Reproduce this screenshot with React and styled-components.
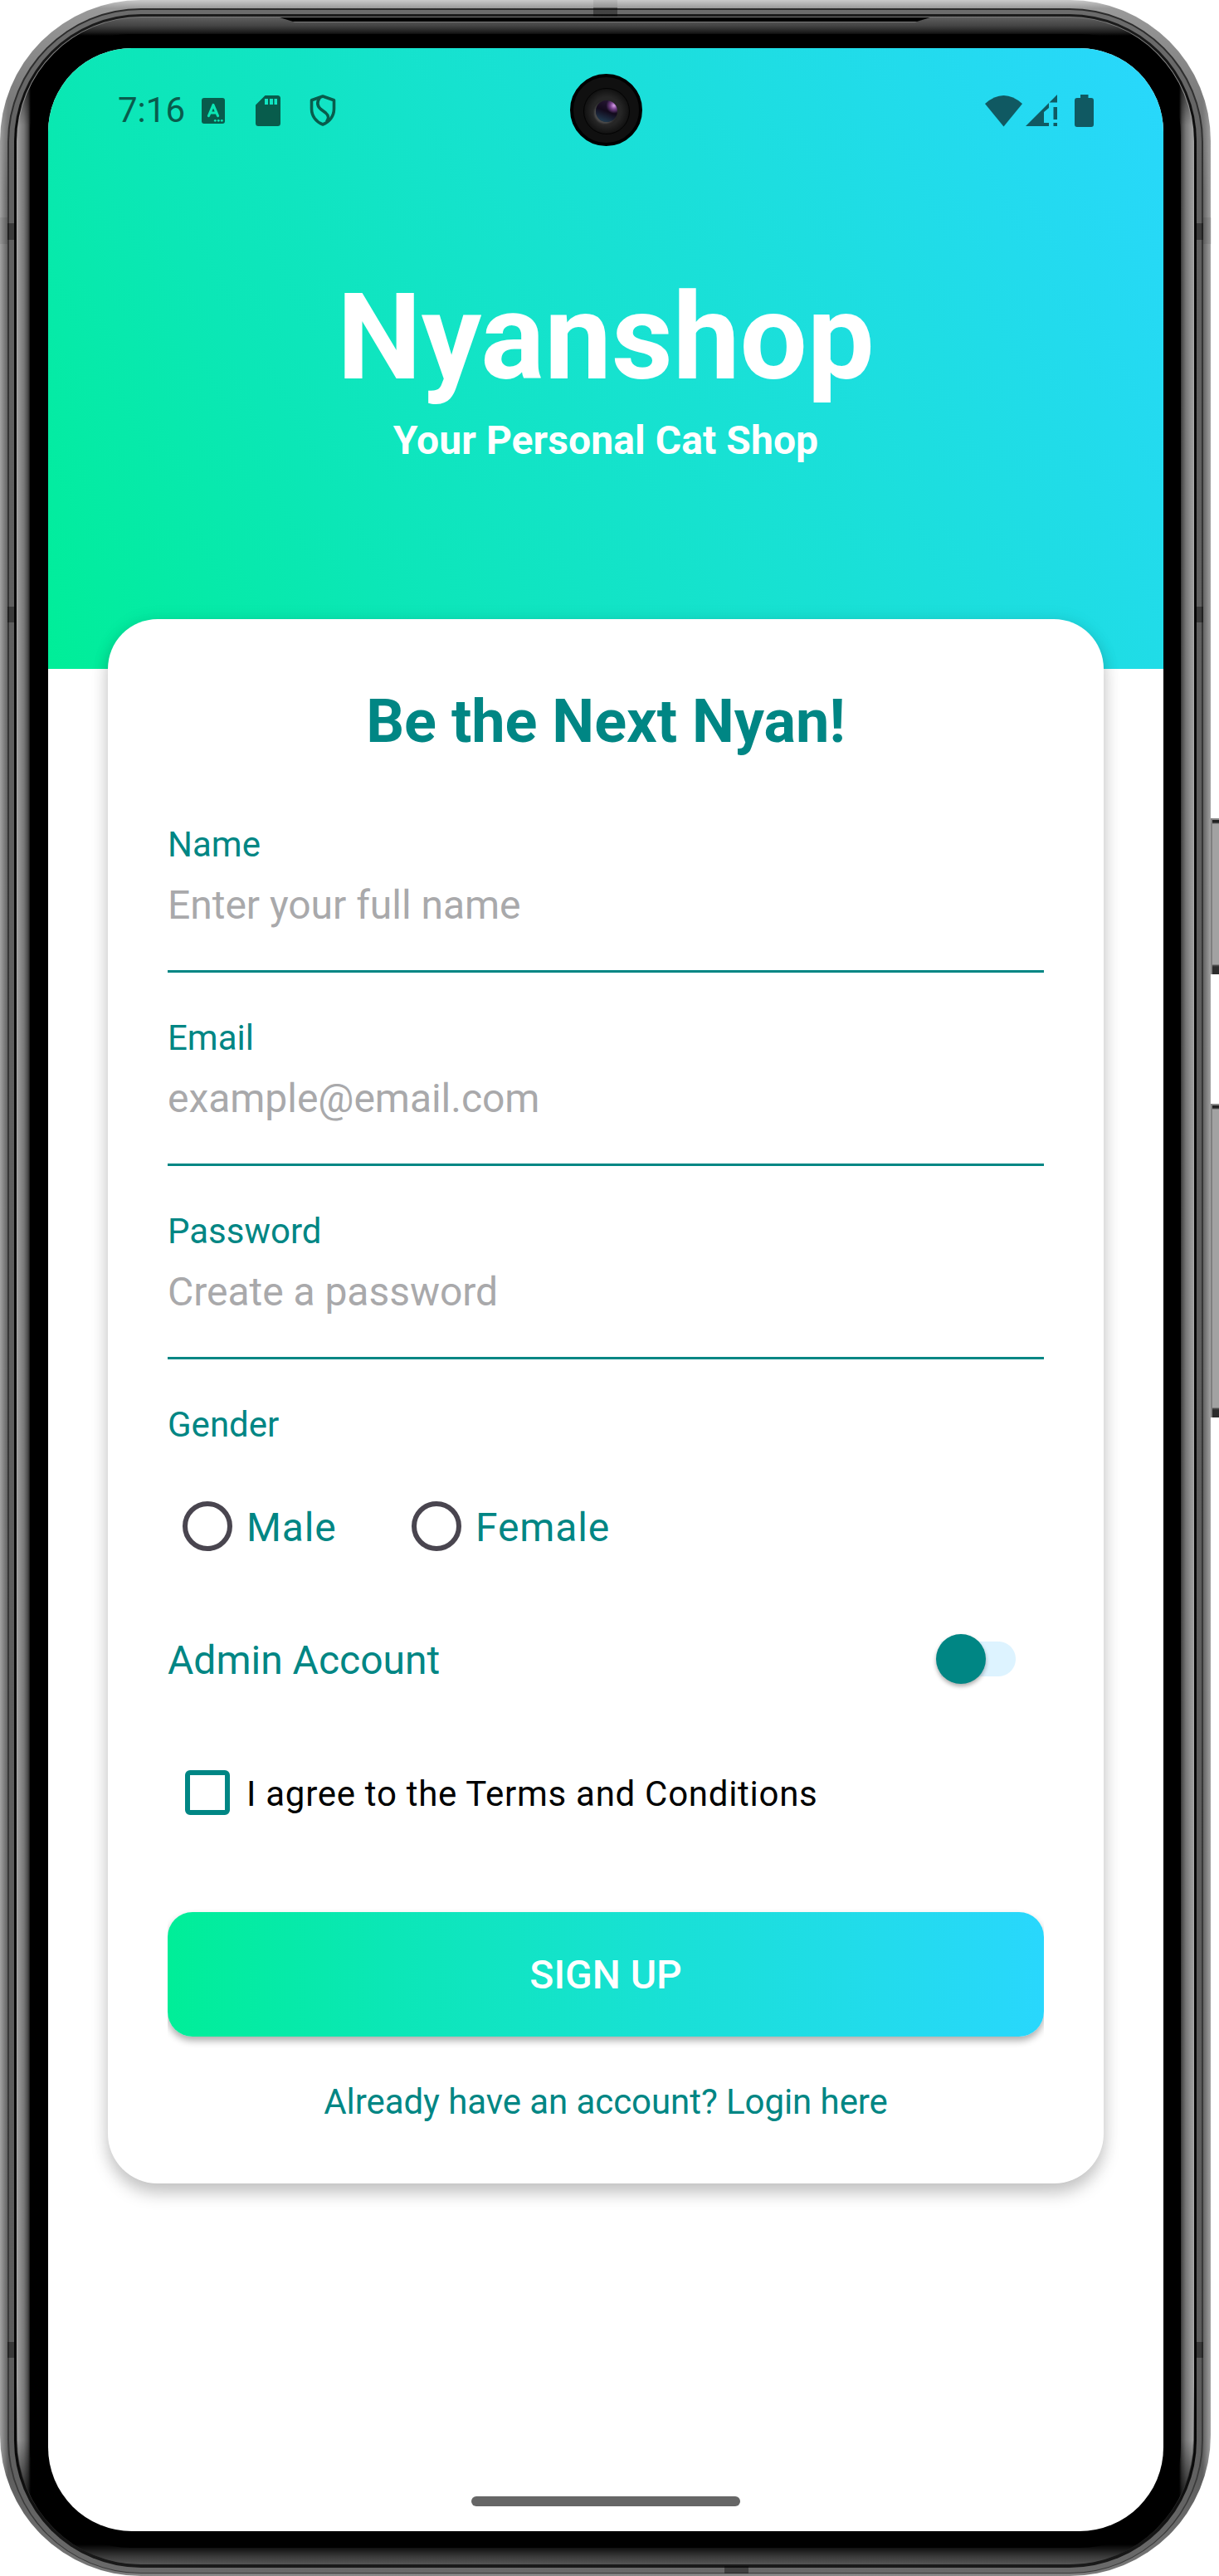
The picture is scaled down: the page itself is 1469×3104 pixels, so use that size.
import React from "react";
import styled, { createGlobalStyle } from "styled-components";

const teal = "#008684";

const GlobalStyle = createGlobalStyle`
  * { box-sizing: border-box; }
  body { margin: 0; background: #fff; font-family: Roboto, "Liberation Sans", sans-serif; overflow: hidden; }
  h1, h2, p { margin: 0; }
`;

/* ---------- device ---------- */
const Device = styled.div`
  position: relative;
  width: 1469px;
  height: 3104px;
  padding-right: 10px;
  overflow: hidden;
`;

/* One band of the metal frame: its side tones blend into the top and bottom tones at the corners. */
const Band = styled.div`
  height: 100%;
  padding: ${(p) => p.$pad};
  border-radius: ${(p) => p.$r}px;
  background: ${(p) => p.$fill};
`;

const Chassis = styled(Band)`
  background:
    linear-gradient(180deg, #cacaca 0, #999 10px, rgba(160, 160, 160, 0) 230px),
    linear-gradient(0deg, #8c8c8c 0, #777 4px, rgba(130, 130, 130, 0) 130px),
    linear-gradient(90deg, #a2a2a2 0, #5c5c5c 10px, #5c5c5c 1449px, #a2a2a2 1459px);
`;

const Bezel = styled(Band)`
  background:
    linear-gradient(180deg, #5e5e5e 0, #444 10px, #1c1c1c 18px, #000 22px, #000 34px, rgba(0, 0, 0, 0) 130px),
    linear-gradient(0deg, #555 0, #383838 10px, #101010 20px, #000 24px, #000 50px, rgba(0, 0, 0, 0) 150px),
    linear-gradient(90deg, #9c9c9c 0, #777 8px, #484848 13px, #000 16px, #000 1400px, #484848 1403px, #777 1408px, #9c9c9c 1416px);
`;

const Glass = styled(Band)`
  background: #000;
`;

const SpeakerSlot = styled.div`
  position: absolute;
  top: 21px;
  left: 337px;
  width: 784px;
  height: 7px;
  background: linear-gradient(180deg, #000 0 5px, #777 5px 6px, #505050 6px);
  clip-path: polygon(0 0, 100% 0, 768px 5px, 764px 7px, 20px 7px, 16px 5px);
`;

const Antenna = styled.div`
  position: absolute;
  background: rgba(0, 0, 0, 0.38);
  left: ${(p) => p.$x}px;
  top: ${(p) => p.$y}px;
  width: ${(p) => p.$w}px;
  height: ${(p) => p.$h}px;
`;

const SoftMark = styled(Antenna)`
  background: rgba(0, 0, 0, 0.07);
`;

const SideKey = styled.div`
  position: absolute;
  left: 1459px;
  top: ${(p) => p.$y}px;
  width: 10px;
  height: ${(p) => p.$h}px;
  border-left: 2px solid #808080;
  background: linear-gradient(180deg, #8a8a8a 0 2px, #222 2px 5px, #a2a2a2 7px, #a2a2a2 calc(100% - 12px), #555 calc(100% - 11px), #2c2c2c calc(100% - 9px));
`;

/* ---------- screen ---------- */
const Screen = styled.div`
  position: relative;
  display: flex;
  flex-direction: column;
  width: 1344px;
  height: 2992px;
  border-radius: 101px;
  overflow: hidden;
  background: #fff;
`;

const Header = styled.header`
  flex: none;
  height: 748px;
  padding-top: 45px;
  text-align: center;
  color: #fff;
  background: linear-gradient(60.9deg, #00ee98 0%, #0be7b6 25%, #16e2cf 50%, #29d7fd 100%);
`;

const StatusBar = styled.div`
  display: flex;
  align-items: center;
  justify-content: space-between;
  height: 60px;
  padding: 0 84px;
`;

const StatusGroup = styled.div`
  display: flex;
  align-items: center;
  height: 60px;
  color: ${(p) => p.$tone};
`;

const Clock = styled.span`
  width: 101px;
  font-size: 42px;
  line-height: 60px;
  text-align: left;
`;

const Glyph = styled.svg`
  display: block;
  flex: none;
  margin-right: ${(p) => p.$gap || 0}px;
`;

const Camera = styled.div`
  position: absolute;
  top: 31px;
  left: 629px;
  display: flex;
  align-items: center;
  justify-content: center;
  width: 87px;
  height: 87px;
  border-radius: 50%;
  border: 4px solid #000;
  background: #101010;
`;

const CameraRing = styled.div`
  display: flex;
  align-items: center;
  justify-content: center;
  width: 56px;
  height: 56px;
  margin-top: 3px;
  border-radius: 50%;
  border: 1.5px solid #020202;
  background: radial-gradient(circle at 50% 50%, #262626 0 45%, #121212 70%);
`;

const Lens = styled.div`
  width: 26px;
  height: 26px;
  border-radius: 50%;
  box-shadow: -2px 2px 2px #4c4c4c;
  background:
    radial-gradient(circle at 84% 24%, #d9a0ea 0, #7a4490 14%, rgba(60, 30, 80, 0) 32%),
    linear-gradient(200deg, #2a1838 0, #120a1c 50%, #24485e 100%);
`;

const Brand = styled.h1`
  margin-top: 159px;
  font-size: 144px;
  font-weight: 700;
  line-height: 170px;
`;

const Tagline = styled.p`
  margin-top: 7px;
  font-size: 48px;
  font-weight: 700;
  line-height: 64px;
  letter-spacing: 0.08px;
`;

const Card = styled.form`
  position: relative;
  flex: none;
  height: 1885px;
  margin: -60px 72px 0;
  padding: 76px 72px 0;
  border-radius: 60px;
  background: #fff;
  box-shadow: 0 12px 20px rgba(0, 0, 0, 0.21), 0 0 22px rgba(0, 0, 0, 0.07);
`;

const Heading = styled.h2`
  margin-bottom: 72px;
  font-size: 72px;
  font-weight: 700;
  line-height: 96px;
  text-align: center;
  color: ${teal};
`;

const Field = styled.label`
  display: block;
  height: 233px;
`;

const Label = styled.span`
  display: block;
  height: 56px;
  font-size: 42px;
  line-height: 56px;
  color: ${teal};
`;

const Input = styled.input`
  display: block;
  width: 100%;
  height: 113px;
  margin: 13px 0 0;
  padding: 0 0 47px;
  border: 0;
  border-bottom: 3px solid ${teal};
  outline: 0;
  background: transparent;
  font: 400 48px/63px Roboto, "Liberation Sans", sans-serif;
  letter-spacing: -0.03px;
  color: #222;
  &::placeholder { color: #a9a9ab; opacity: 1; }
`;

const Radios = styled.div`
  display: flex;
  height: 60px;
  margin: 64px 0 100px;
  padding-left: 18px;
`;

const Option = styled.label`
  display: flex;
  width: 276px;
`;

const RadioMark = styled.span`
  flex: none;
  width: 60px;
  height: 60px;
  margin-right: 17px;
  border: 6px solid #49454f;
  border-radius: 50%;
`;

const Caption = styled.span`
  padding-top: 2px;
  font-size: 48px;
  line-height: 60px;
  letter-spacing: ${(p) => (p.$spaced ? "0.86px" : "0")};
  color: ${teal};
`;

const SwitchRow = styled.div`
  display: flex;
  justify-content: space-between;
  height: 60px;
  padding-right: 34px;
`;

const Switch = styled.div`
  display: flex;
  align-items: center;
  width: 96px;
  height: 60px;
  background: linear-gradient(#ddf3ff, #ddf3ff) no-repeat 6px 9px / 69px 42px,
    radial-gradient(circle at 75px 30px, #ddf3ff 20.5px, transparent 21.5px);
`;

const Thumb = styled.span`
  width: 60px;
  height: 60px;
  border-radius: 50%;
  background: ${teal};
  box-shadow: 0 3px 5px rgba(0, 0, 0, 0.32);
`;

const Agreement = styled.label`
  display: flex;
  height: 54px;
  margin-top: 104px;
  padding-left: 21px;
`;

const CheckMark = styled.span`
  flex: none;
  width: 54px;
  height: 54px;
  margin-right: 20px;
  border: 6px solid ${teal};
  border-radius: 6px;
`;

const AgreementText = styled.span`
  padding-top: 2px;
  font-size: 42px;
  line-height: 54px;
  letter-spacing: 0.72px;
  color: #000;
`;

const Submit = styled.button`
  display: block;
  width: 100%;
  height: 150px;
  margin: 117px 0 51px;
  padding: 0;
  border: 0;
  border-radius: 30px;
  background: linear-gradient(90deg, #00ee98 0%, #0be7b6 25%, #16e2cf 50%, #29d7fd 100%);
  box-shadow: 0 5px 8px rgba(0, 0, 0, 0.32);
  clip-path: inset(-10px 0 -20px 0);
  font: 500 48px/152px Roboto, "Liberation Sans", sans-serif;
  color: #fff;
`;

const LoginLink = styled.p`
  font-size: 42px;
  line-height: 56px;
  letter-spacing: -0.07px;
  text-align: center;
  color: ${teal};
`;

const HomeBar = styled.div`
  flex: none;
  align-self: center;
  width: 324px;
  height: 12px;
  margin: auto 0 30px;
  border-radius: 6px;
  background: #666;
`;

const bands = [
  { pad: "2px 2px 1px", r: 161, fill: "linear-gradient(180deg, #2b2b2b, #333 200px, #3a3a3a)" },
  { pad: "5px 6px 6px", r: 159, fill: "linear-gradient(180deg, #6c6c6c, #606060 200px, #5c5c5c 2900px, #6a6a6a)" },
  { pad: "3px 3px 4px", r: 153, fill: "linear-gradient(180deg, #1c1c1c, #050505 200px, #050505 2900px, #1a1a1a)" },
  { pad: "1px 1px 0", r: 150, fill: "linear-gradient(180deg, #7c7c7c, #aaa 200px, #aaa 2850px, #333 2960px)" },
];

const fields = [
  { label: "Name", hint: "Enter your full name" },
  { label: "Email", hint: "example@email.com" },
  { label: "Password", hint: "Create a password" },
];

const marks = [
  [9, 269, 9, 20], [9, 731, 9, 19], [9, 2822, 9, 19],
  [1441, 269, 9, 20], [1441, 731, 9, 19], [1441, 2822, 9, 19],
  [715, 9, 29, 11], [873, 3092, 29, 9],
];

const softMarks = [[0, 262, 9, 32], [1450, 262, 10, 32], [715, 0, 29, 9]];

function Frame({ children }) {
  const core = (
    <Bezel $pad="20px 15px 20px" $r={149}>
      <Glass $pad="17px 21px 20px 22px" $r={122}>{children}</Glass>
    </Bezel>
  );
  return (
    <Chassis $pad="10px 9px 3px" $r={170}>
      {bands.reduceRight((inner, b) => (
        <Band $pad={b.pad} $r={b.r} $fill={b.fill}>{inner}</Band>
      ), core)}
    </Chassis>
  );
}

function StatusIcons() {
  return (
    <StatusBar>
      <StatusGroup $tone="#085c4c">
        <Clock>7:16</Clock>
        <Glyph width="28" height="31" viewBox="0 0 28 31" $gap={37}>
          <rect width="28" height="31" rx="3" fill="currentColor" />
          <path d="M8.5 21.5 14 8.5l5.5 13M10.5 18h7" fill="none" stroke="#0be6b4" strokeWidth="3.2" strokeLinecap="round" strokeLinejoin="round" />
          <g fill="#0be6b4"><circle cx="16.3" cy="27.3" r="1.4" /><circle cx="20.3" cy="27.3" r="1.4" /><circle cx="24.3" cy="27.3" r="1.4" /></g>
        </Glyph>
        <Glyph width="30" height="37" viewBox="0 0 30 37" $gap={35}>
          <path fill="currentColor" fillRule="evenodd" d="M11.5 0H26.5Q30 0 30 3.5V33.5Q30 37 26.5 37H3.5Q0 37 0 33.5V11.5ZM11 4v7h4V4ZM17 4v7h4V4ZM22.5 4v7h3.5V4Z" />
        </Glyph>
        <Glyph width="32" height="38" viewBox="0 0 32 38">
          <g fill="none" stroke="currentColor" strokeWidth="3.6" strokeLinejoin="round">
            <path d="M16 2 29.5 6.800V17C29.5 26 24 33 16 36 8 33 2.5 26 2.5 17V6.800Z" />
            <path d="M12.5 3.5C8.5 9 9 13.5 13.5 17.5L19.5 22C23.5 25.5 23.5 28.5 20.5 33" />
          </g>
        </Glyph>
      </StatusGroup>
      <StatusGroup $tone="#105962">
        <Glyph width="45" height="39" viewBox="0 0 45 39" $gap={4}>
          <path fill="currentColor" d="M0 11Q22.5-9 45 11L22.5 38.5Z" />
        </Glyph>
        <Glyph width="38" height="38" viewBox="0 0 38 38" $gap={21}>
          <path fill="currentColor" d="M38 0V9.500H28.500ZM28 10V16L22 21V34H28V38H0ZM33.500 15H38V30H33.500ZM33.500 34H38V38H33.500Z" />
        </Glyph>
        <Glyph width="23" height="39" viewBox="0 0 23 39">
          <path fill="currentColor" d="M7 0H16.500V4H20Q23 4 23 7V36Q23 39 20 39H3Q0 39 0 36V7Q0 4 3 4H7Z" />
        </Glyph>
      </StatusGroup>
    </StatusBar>
  );
}

export default function App() {
  return (
    <Device>
      <GlobalStyle />
      <Frame>
        <Screen>
          <Header>
            <StatusIcons />
            <Brand>Nyanshop</Brand>
            <Tagline>Your Personal Cat Shop</Tagline>
          </Header>
          <Card>
            <Heading>Be the Next Nyan!</Heading>
            {fields.map((f) => (
              <Field key={f.label}>
                <Label>{f.label}</Label>
                <Input placeholder={f.hint} />
              </Field>
            ))}
            <Label>Gender</Label>
            <Radios>
              <Option><RadioMark /><Caption $spaced>Male</Caption></Option>
              <Option><RadioMark /><Caption $spaced>Female</Caption></Option>
            </Radios>
            <SwitchRow>
              <Caption>Admin Account</Caption>
              <Switch><Thumb /></Switch>
            </SwitchRow>
            <Agreement>
              <CheckMark />
              <AgreementText>I agree to the Terms and Conditions</AgreementText>
            </Agreement>
            <Submit type="button">SIGN UP</Submit>
            <LoginLink>Already have an account? Login here</LoginLink>
          </Card>
          <HomeBar />
          <Camera><CameraRing><Lens /></CameraRing></Camera>
        </Screen>
      </Frame>
      <SpeakerSlot />
      {marks.map(([x, y, w, h]) => <Antenna key={`${x}-${y}`} $x={x} $y={y} $w={w} $h={h} />)}
      {softMarks.map(([x, y, w, h]) => <SoftMark key={`${x}-${y}`} $x={x} $y={y} $w={w} $h={h} />)}
      <SideKey $y={986} $h={188} />
      <SideKey $y={1330} $h={378} />
    </Device>
  );
}
